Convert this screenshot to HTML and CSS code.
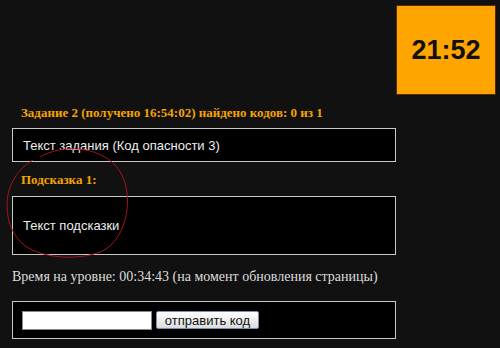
FILE: index.html
```html
<!DOCTYPE html>
<html lang="ru">
<head>
    <meta charset="UTF-8">
    <title>Задание 2</title>
    <link rel="stylesheet" href="styles.css">
</head>
<body>
    <div class="page">
        <div class="top">
            <div class="timer">21:52</div>
        </div>

        <div class="content">
            <h3 class="title">Задание 2 (получено 16:54:02) найдено кодов: 0 из 1</h3>
            <div class="box task">Текст задания (Код опасности 3)</div>

            <h3 class="title hint-title">Подсказка 1:</h3>
            <div class="box hint">Текст подсказки</div>

            <p class="level-time">Время на уровне: 00:34:43 (на момент обновления страницы)</p>

            <form class="box code-form">
                <input type="text" class="code-input">
                <button type="button" class="code-btn">отправить код</button>
            </form>
        </div>

        <!-- hand-drawn mark over the hint -->
        <svg class="mark" width="500" height="348" viewBox="0 0 500 348">
            <path d="M40,157 C62,144 98,146 116,166 C134,186 131,232 106,249 C86,261 44,260 24,245 C4,229 3,196 14,179 C19,170 26,164 33,160" fill="none" stroke="#a3141c" stroke-width="1"/>
        </svg>
    </div>
</body>
</html>
```

FILE: styles.css
```css
body {
    margin: 0;
    background-color: #111111;
    font-family: "Liberation Sans", Arial, sans-serif;
}
.page {
    position: relative;
    width: 500px;
    height: 348px;
    overflow: hidden;
}
.top {
    display: flex;
    justify-content: flex-end;
    padding: 5px 4px 0 0;
}
.timer {
    width: 98px;
    height: 88px;
    background-color: #ffa500;
    border: 1px solid #5a2a10;
    display: flex;
    align-items: center;
    justify-content: center;
    font-weight: bold;
    font-size: 27px;
    color: #111;
}
.content {
    width: 384px;
    margin-left: 12px;
}
.title {
    margin: 0;
    padding-left: 9px;
    font-family: "Liberation Serif", "Times New Roman", serif;
    font-size: 13px;
    font-weight: bold;
    color: #f5a300;
    line-height: 16px;
    margin-top: 10px;
}
.box {
    background-color: #000;
    border: 1px solid #c8c8c8;
    color: #eeeeee;
    font-size: 13px;
    box-sizing: border-box;
    padding: 0 10px;
}
.task {
    margin-top: 7px;
    height: 34px;
    display: flex;
    align-items: center;
}
.hint-title {
    margin-top: 10px;
}
.hint {
    margin-top: 8px;
    height: 59px;
    display: flex;
    align-items: center;
}
.level-time {
    margin: 14px 0 0 0;
    font-family: "Liberation Serif", "Times New Roman", serif;
    font-size: 14px;
    color: #dddddd;
    line-height: 16px;
}
.code-form {
    margin-top: 16px;
    height: 38px;
    display: flex;
    align-items: center;
    gap: 4px;
    padding: 0 9px;
}
.code-input {
    width: 130px;
    height: 19px;
    box-sizing: border-box;
    border: 1px solid #888;
    background: #fff;
    padding: 0 3px;
}
.code-btn {
    height: 18px;
    width: 103px;
    padding: 0;
    border: 1px solid #7d8fa9;
    border-radius: 2px;
    background: linear-gradient(#ffffff, #dcdcdc);
    font-family: "Liberation Sans", Arial, sans-serif;
    font-size: 13px;
    color: #111;
}
.mark {
    position: absolute;
    left: 0;
    top: 0;
    pointer-events: none;
}
```
